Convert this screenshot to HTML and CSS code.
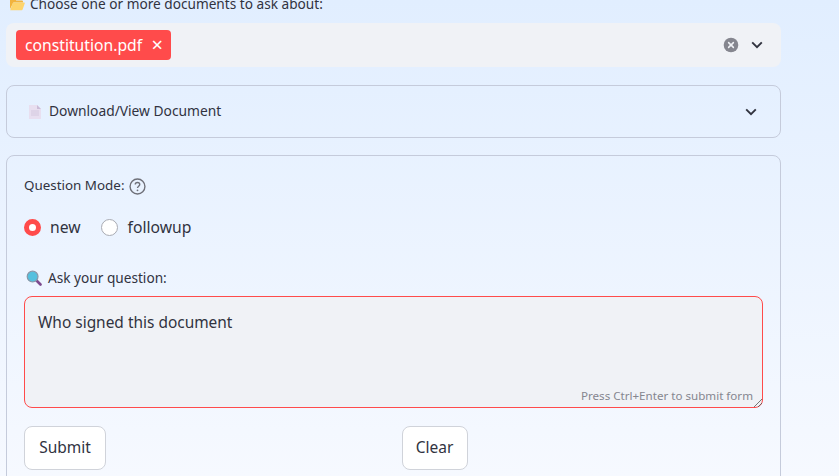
FILE: index.html
```html
<!DOCTYPE html>
<html lang="en">
<head>
<meta charset="utf-8">
<title>Ask about documents</title>
<link rel="stylesheet" href="styles.css">
</head>
<body>
<main class="page">
  <div class="field-label top-label">
    <svg class="emoji folder" viewBox="0 0 16 16"><path d="M1 13V4c0-.8.5-1.2 1.2-1.2h3.6l1.4 1.6h5.6c.7 0 1.2.5 1.2 1.2v1H4.5z" fill="#f2b33d"/><path d="M1.2 14.2 3.6 7.2c.2-.5.5-.7 1-.7H15c.6 0 .9.4.7 1l-2 5.8c-.2.5-.5.9-1.1.9z" fill="#fdd46c"/></svg>
    <span>Choose one or more documents to ask about:</span>
  </div>
  <div class="select">
    <span class="tag"><span>constitution.pdf</span><span class="tag-x">×</span></span>
    <span class="select-actions">
      <svg class="clear-icon" viewBox="0 0 16 16"><circle cx="8" cy="8" r="7.3" fill="#85868f"/><path d="M5.6 5.6l4.8 4.8M10.4 5.6l-4.8 4.8" stroke="#f0f2f6" stroke-width="1.5" stroke-linecap="round"/></svg>
      <svg class="chev" viewBox="0 0 12 8"><path d="M1.2 1.4 6 6.2l4.8-4.8" fill="none" stroke="#31333f" stroke-width="1.9"/></svg>
    </span>
  </div>
  <div class="expander">
    <svg class="emoji doc" viewBox="0 0 12 14"><path d="M0 0h8l4 4v10H0z" fill="#e8dff0"/><path d="M8 0l4 4H8z" fill="#cbbcd8"/><path d="M2 6h8M2 8h8M2 10h8" stroke="#cfc3da" stroke-width=".8"/></svg>
    <span class="expander-title raised">Download/View Document</span>
    <svg class="chev" viewBox="0 0 12 8"><path d="M1.2 1.4 6 6.2l4.8-4.8" fill="none" stroke="#31333f" stroke-width="1.9"/></svg>
  </div>
  <form class="form">
    <div class="field-label mode-label">
      <span class="raised">Question Mode:</span>
      <svg class="help" viewBox="0 0 16 16"><circle cx="8" cy="8" r="7" fill="none" stroke="#6f7079" stroke-width="1.3"/><path d="M5.9 6.2c0-1.2 1-2 2.1-2s2.1.8 2.1 1.9c0 1.6-2.1 1.6-2.1 3.3" fill="none" stroke="#6f7079" stroke-width="1.3"/><circle cx="8" cy="11.6" r=".85" fill="#6f7079"/></svg>
    </div>
    <div class="radios">
      <span class="radio-item"><span class="radio radio-on"></span><span>new</span></span>
      <span class="radio-item"><span class="radio"></span><span>followup</span></span>
    </div>
    <div class="field-label ask-label">
      <svg class="emoji lens" viewBox="0 0 16 16"><path d="M10.5 10.5l4 4" stroke="#7d4a8e" stroke-width="2.6" stroke-linecap="round"/><circle cx="6.6" cy="6.6" r="5.4" fill="#55c0de" stroke="#8a97a8" stroke-width="1.2"/></svg>
      <span>Ask your question:</span>
    </div>
    <div class="textarea">
      <span>Who signed this document</span>
      <span class="hint">Press Ctrl+Enter to submit form</span>
      <svg class="grip" viewBox="0 0 8 8"><path d="M0 8 8 0M4 8l4-4" stroke="#555" stroke-width=".8"/></svg>
    </div>
    <div class="buttons">
      <div class="btn-cell"><span class="btn btn-submit"><span class="raised">Submit</span></span></div>
      <div class="btn-cell"><span class="btn btn-clear"><span class="raised">Clear</span></span></div>
    </div>
  </form>
</main>
</body>
</html>
```
FILE: styles.css
```css
* { box-sizing: border-box; }
html, body { margin: 0; height: 100%; overflow: hidden; }
body {
  background: linear-gradient(180deg, #e1eeff 0%, #f6f9ff 100%);
  font-family: "Noto Sans", "Liberation Sans", sans-serif;
  color: #31333f;
}
.page {
  width: 775px;
  margin: -7px 0 0 6px;
  display: flex;
  flex-direction: column;
}
.raised { padding-bottom: 2px; }
.field-label {
  display: flex;
  align-items: center;
  font-size: 13.65px;
  line-height: 20px;
  height: 20px;
}
.emoji { flex: none; display: block; }
.top-label { padding-left: 3px; gap: 5px; height: 22px; margin-bottom: 8px; }
.folder { width: 16px; height: 16px; }
.select {
  height: 44px;
  background: #f0f2f6;
  border-radius: 8px;
  display: flex;
  align-items: center;
  padding: 0 18px 0 10px;
}
.tag {
  height: 30px;
  width: 155px;
  background: #ff4b4b;
  color: #fff;
  border-radius: 4px;
  font-size: 15.7px;
  display: flex;
  align-items: center;
  padding: 0 8px 0 9px;
  justify-content: space-between;
}
.tag-x { font-size: 20px; line-height: 1; }
.select-actions { margin-left: auto; display: flex; align-items: center; gap: 12px; }
.clear-icon { width: 16px; height: 16px; display: block; }
.chev { width: 12px; height: 8px; display: block; flex: none; }
.expander {
  margin-top: 18px;
  height: 53px;
  border: 1px solid #c5cbdb;
  border-radius: 8px;
  display: flex;
  align-items: center;
  padding: 0 23px 0 22px;
  font-size: 13.8px;
}
.doc { width: 12px; height: 14px; }
.expander-title { margin-left: 8px; flex: 1; }
.form {
  margin-top: 17px;
  height: 340px;
  border: 1px solid #c5cbdb;
  border-radius: 8px;
  padding: 20px 17px 0;
}
.mode-label { gap: 5px; font-size: 13.4px; }
.help { width: 17px; height: 17px; }
.radios { display: flex; gap: 20px; margin-top: 19px; font-size: 15.7px; line-height: 24px; }
.radio-item { display: flex; align-items: center; gap: 10px; }
.radio-item:first-child { gap: 9px; }
.radio {
  width: 17px;
  height: 17px;
  border-radius: 50%;
  background: #fff;
  border: 1px solid #a9abb3;
  display: block;
}
.radio-on { background: #fff; border: 5px solid #ff4b4b; }
.ask-label { margin-top: 29px; padding-left: 2px; gap: 6px; }
.lens { width: 16px; height: 16px; }
.textarea {
  position: relative;
  margin-top: 8px;
  height: 112px;
  background: #f0f2f6;
  border: 1px solid #ff4b4b;
  border-radius: 8px;
  padding: 13px;
  font-size: 15.45px;
  line-height: 24px;
}
.hint {
  position: absolute;
  right: 9px;
  bottom: 3px;
  font-size: 11.6px;
  line-height: 16px;
  color: #85868f;
}
.grip { position: absolute; right: 0; bottom: 0; width: 8px; height: 8px; }
.buttons { display: flex; gap: 16px; margin-top: 18px; }
.btn-cell { flex: 1; }
.btn {
  display: inline-flex;
  align-items: center;
  justify-content: center;
  height: 44px;
  background: #fff;
  border: 1px solid #d0d3da;
  border-radius: 8px;
  font-size: 15.5px;
}
.btn-submit { width: 82px; }
.btn-clear { width: 66px; }
```
